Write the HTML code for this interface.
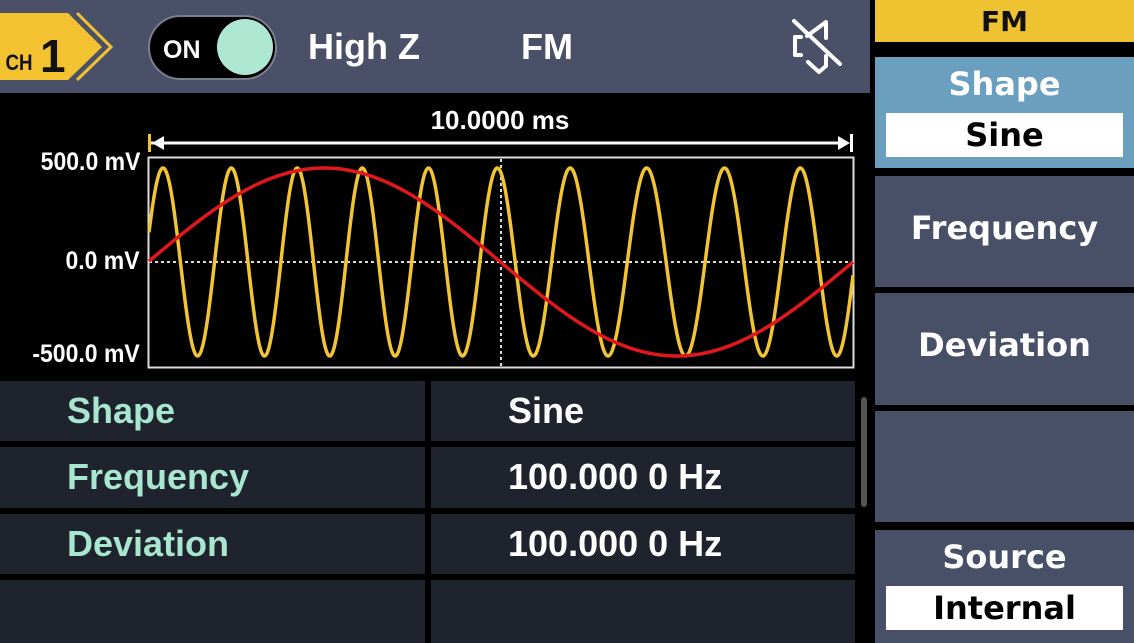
<!DOCTYPE html>
<html><head><meta charset="utf-8"><style>
*{margin:0;padding:0;box-sizing:border-box}
body{width:1134px;height:643px;background:#000;overflow:hidden;position:relative;font-family:"Liberation Sans",sans-serif;font-weight:bold}
.abs{position:absolute}
#hdr{left:0;top:0;width:870px;height:93px;background:#4a5068}
.ht{color:#fff;font-size:36px;top:26px}
.cell{position:absolute;background:#1e232d}
.lab{position:absolute;color:#a8e6cf;font-size:36px;left:67px}
.val{position:absolute;color:#fff;font-size:36px;left:508px}
.rb{position:absolute;left:875px;width:259px;background:#485068;color:#fff;font-family:"DejaVu Sans",sans-serif;font-weight:bold;font-size:32px;text-align:center}
.wbox{position:absolute;left:11px;width:237px;height:44px;background:#fff;color:#000;line-height:44px}
.yl{color:#fff;font-size:25px;right:994px;transform:scaleX(.92);transform-origin:right}
</style></head><body>
<div id="hdr" class="abs"></div>
<svg class="abs" style="left:0;top:0" width="870" height="93">
<polygon points="0,13 68,13 102,47 68,80 0,80" fill="#f2c230"/>
<polyline points="77,13 111,47 77,80" fill="none" stroke="#f2c230" stroke-width="3"/>
<text x="3" y="70" font-size="22" font-family="Liberation Sans" font-weight="bold" fill="#111" transform="translate(3,0) scale(0.85,1)">CH</text>
<text x="40" y="72" font-size="46" font-family="Liberation Sans" font-weight="bold" fill="#111">1</text>
<rect x="149" y="16" width="127" height="63" rx="31.5" fill="#000" stroke="#7a7f8e" stroke-width="2"/>
<text x="163" y="58" font-size="25" font-family="Liberation Sans" font-weight="bold" fill="#fff">ON</text>
<circle cx="245" cy="47" r="28" fill="#aee8d2"/>
<g fill="none" stroke="#fff" stroke-width="4" stroke-linejoin="round" stroke-linecap="round">
<path d="M801,37 H795 V55 H801"/>
<path d="M807,36 L826,22 V38"/>
<path d="M808,62 L819,72 L826,66 V56"/>
<path d="M794,21 L840,64"/>
</g>
</svg>
<div class="abs ht" style="left:308px">High Z</div>
<div class="abs ht" style="left:521px">FM</div>

<svg class="abs" style="left:0;top:93px" width="870" height="285">
<text x="500" y="36" text-anchor="middle" font-size="26" fill="#fff" font-family="Liberation Sans" font-weight="bold">10.0000 ms</text>
<line x1="150" y1="50" x2="841" y2="50" stroke="#fff" stroke-width="3"/>
<polygon points="152,50 164,43 164,57" fill="#fff"/>
<polygon points="850,50 838,43 838,57" fill="#fff"/>
<rect x="850" y="41" width="3" height="18" fill="#fff"/>
<rect x="148" y="41" width="3" height="18" fill="#f2c230"/>
<rect x="148.5" y="64.5" width="705" height="210" fill="none" stroke="#ddd" stroke-width="2"/>
<line x1="149" y1="169" x2="853" y2="169" stroke="#ddd" stroke-width="2" stroke-dasharray="3,3"/>
<line x1="501" y1="66" x2="501" y2="274" stroke="#ddd" stroke-width="2" stroke-dasharray="3,3"/>
<path id="yw" fill="none" stroke="#f0c434" stroke-width="3.5"/>
<path id="rw" fill="none" stroke="#e0181c" stroke-width="3.5"/>
</svg>
<div class="abs yl" style="top:148px">500.0 mV</div>
<div class="abs yl" style="top:247px">0.0 mV</div>
<div class="abs yl" style="top:340px">-500.0 mV</div>

<div class="cell" style="left:0;top:381px;width:425px;height:60px"></div>
<div class="cell" style="left:431px;top:381px;width:424px;height:60px"></div>
<div class="cell" style="left:0;top:447px;width:425px;height:61px"></div>
<div class="cell" style="left:431px;top:447px;width:424px;height:61px"></div>
<div class="cell" style="left:0;top:514px;width:425px;height:60px"></div>
<div class="cell" style="left:431px;top:514px;width:424px;height:60px"></div>
<div class="cell" style="left:0;top:580px;width:425px;height:63px"></div>
<div class="cell" style="left:431px;top:580px;width:424px;height:63px"></div>
<div class="abs" style="left:861px;top:397px;width:6px;height:110px;background:#555;border-radius:3px"></div>
<div class="lab" style="top:390px">Shape</div>
<div class="val" style="top:390px">Sine</div>
<div class="lab" style="top:456px">Frequency</div>
<div class="val" style="top:456px">100.000 0 Hz</div>
<div class="lab" style="top:523px">Deviation</div>
<div class="val" style="top:523px">100.000 0 Hz</div>

<div class="rb" style="top:0;height:42px;background:#efc232;color:#111;font-size:28px;line-height:44px">FM</div>
<div class="rb" style="top:57px;height:111px;background:#6a9fc0"><div style="position:absolute;top:8px;width:100%">Shape</div><div class="wbox" style="top:56px">Sine</div></div>
<div class="rb" style="top:176px;height:111px;line-height:104px">Frequency</div>
<div class="rb" style="top:293px;height:112px;line-height:104px">Deviation</div>
<div class="rb" style="top:411px;height:111px"></div>
<div class="rb" style="top:530px;height:113px"><div style="position:absolute;top:8px;width:100%">Source</div><div class="wbox" style="top:56px">Internal</div></div>
<script>
var y="",r="";
for(var x=149;x<=853;x+=1){
 var t=x-148;
 var ph=t*0.0141+0.1436*(1-Math.cos(2*Math.PI*t/705))+0.037;
 var yy=169-94*Math.sin(2*Math.PI*ph);
 var rr=169-94*Math.sin(2*Math.PI*t/705);
 y+=(x==149?"M":"L")+x+","+yy.toFixed(1);
 r+=(x==149?"M":"L")+x+","+rr.toFixed(1);
}
document.getElementById("yw").setAttribute("d",y);
document.getElementById("rw").setAttribute("d",r);
</script>
</body></html>
